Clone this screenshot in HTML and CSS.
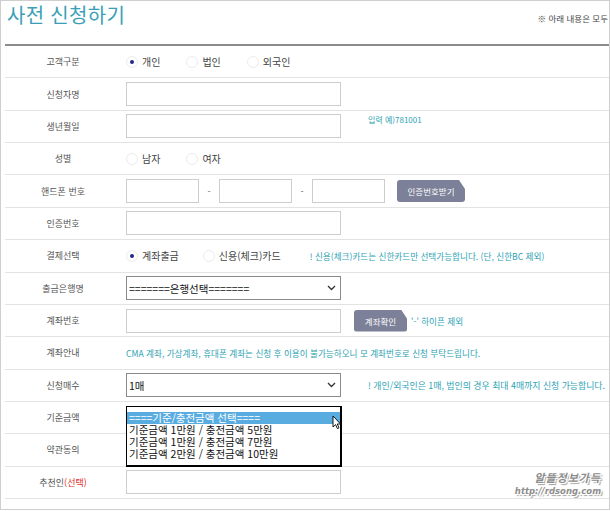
FILE: index.html
```html
<!DOCTYPE html>
<html lang="ko">
<head>
    <meta charset="UTF-8" />
    <meta name="viewport" content="width=device-width, initial-scale=1.0" />
    <title>사전 신청하기</title>
    <link rel="stylesheet" href="styles.css">
</head>
<body>
    <div class="page">
        <div class="head">
            <h1 class="title">사전 신청하기</h1>
            <div class="head-note">※ 아래 내용은 모두</div>
        </div>

        <div class="form">
            <div class="row">
                <div class="label">고객구분</div>
                <div class="field">
                    <span class="radio checked"></span><span class="opt">개인</span>
                    <span class="radio"></span><span class="opt">법인</span>
                    <span class="radio"></span><span class="opt">외국인</span>
                </div>
            </div>

            <div class="row">
                <div class="label">신청자명</div>
                <div class="field"><input class="text" type="text" /></div>
            </div>

            <div class="row">
                <div class="label">생년월일</div>
                <div class="field">
                    <input class="text" type="text" />
                    <span class="note note-birth">입력 예)781001</span>
                </div>
            </div>

            <div class="row">
                <div class="label">성별</div>
                <div class="field">
                    <span class="radio"></span><span class="opt">남자</span>
                    <span class="radio"></span><span class="opt">여자</span>
                </div>
            </div>

            <div class="row">
                <div class="label">핸드폰 번호</div>
                <div class="field">
                    <input class="text short" type="text" />
                    <span class="dash">-</span>
                    <input class="text short" type="text" />
                    <span class="dash">-</span>
                    <input class="text short" type="text" />
                    <span class="btn btn-auth">인증번호받기</span>
                </div>
            </div>

            <div class="row">
                <div class="label">인증번호</div>
                <div class="field"><input class="text" type="text" /></div>
            </div>

            <div class="row">
                <div class="label">결제선택</div>
                <div class="field">
                    <span class="radio checked"></span><span class="opt opt-pay">계좌출금</span>
                    <span class="radio"></span><span class="opt">신용(체크)카드</span>
                    <span class="note note-card">! 신용(체크)카드는 신한카드만 선택가능합니다. (단, 신한BC 제외)</span>
                </div>
            </div>

            <div class="row">
                <div class="label">출금은행명</div>
                <div class="field">
                    <div class="select">
                        <span>=======은행선택=======</span>
                        <svg class="chevron" width="9" height="6" viewBox="0 0 9 6"><path d="M1 1 L4.5 4.5 L8 1" fill="none" stroke="#333" stroke-width="1.3"/></svg>
                    </div>
                </div>
            </div>

            <div class="row">
                <div class="label">계좌번호</div>
                <div class="field">
                    <input class="text" type="text" />
                    <span class="btn btn-account">계좌확인</span>
                    <span class="note">'-' 하이픈 제외</span>
                </div>
            </div>

            <div class="row">
                <div class="label">계좌안내</div>
                <div class="field">
                    <span class="note note-wide">CMA 계좌, 가상계좌, 휴대폰 계좌는 신청 후 이용이 불가능하오니 모 계좌번호로 신청 부탁드립니다.</span>
                </div>
            </div>

            <div class="row">
                <div class="label">신청매수</div>
                <div class="field">
                    <div class="select">
                        <span>1매</span>
                        <svg class="chevron" width="9" height="6" viewBox="0 0 9 6"><path d="M1 1 L4.5 4.5 L8 1" fill="none" stroke="#333" stroke-width="1.3"/></svg>
                    </div>
                    <span class="note note-count">! 개인/외국인은 1매, 법인의 경우 최대 4매까지 신청 가능합니다.</span>
                </div>
            </div>

            <div class="row">
                <div class="label">기준금액</div>
                <div class="field"></div>
                <!-- opened dropdown list lies over the next row -->
                <div class="listbox">
                    <div class="item active">====기준/충전금액 선택====</div>
                    <div class="item">기준금액 1만원 / 충전금액 5만원</div>
                    <div class="item">기준금액 1만원 / 충전금액 7만원</div>
                    <div class="item">기준금액 2만원 / 충전금액 10만원</div>
                    <svg class="cursor" width="10" height="15" viewBox="0 0 10 15"><path d="M1 1 L1 12 L3.6 9.6 L5.4 13.6 L7 12.9 L5.3 9 L8.6 9 Z" fill="#fff" stroke="#000" stroke-width="0.9" stroke-linejoin="round"/></svg>
                </div>
            </div>

            <div class="row">
                <div class="label">약관동의</div>
                <div class="field"></div>
            </div>

            <div class="row">
                <div class="label">추천인<span class="red">(선택)</span></div>
                <div class="field"><input class="text" type="text" /></div>
            </div>
        </div>

        <div class="watermark">
            <div class="wm-name">알뜰정보가득</div>
            <div class="wm-url">http://rdsong.com</div>
        </div>
    </div>
</body>
</html>
```

FILE: styles.css
```css
/* Page frame */
body {
    margin: 0;
    background-color: #fff;
    font-family: "Noto Sans CJK KR", "Noto Sans", sans-serif;
    color: #555;
}

.page {
    position: relative;
    width: 610px;
    height: 510px;
    box-sizing: border-box;
    border: 1px solid #cfcfcf;
    overflow: hidden;
}

/* Header */
.head {
    display: flex;
    justify-content: space-between;
    height: 43px;
}

.title {
    margin: 0;
    padding: 1px 0 0 6px;
    font-size: 20px;
    line-height: 26px;
    font-weight: 400;
    color: #3b9fb7;
    letter-spacing: 0.3px;
}

.head-note {
    margin: 12px 1px 0 0;
    font-size: 8.5px;
    line-height: 10px;
    white-space: nowrap;
    color: #444;
}

/* Form table */
.form {
    margin-left: 4px;
    border-top: 2px solid #8c8c8c;
}

.row {
    position: relative;
    display: flex;
    align-items: center;
    height: 32.36px;
    box-sizing: border-box;
    border-bottom: 1px solid #e3e3e3;
}

.label {
    width: 116px;
    text-align: center;
    font-size: 9px;
    color: #555;
}

.red {
    color: #e0302a;
}

.field {
    display: flex;
    align-items: center;
    padding-left: 5px;
    font-size: 10px;
    color: #444;
}

/* Inputs */
.text {
    width: 215px;
    height: 24px;
    box-sizing: border-box;
    margin: 0;
    border: 1px solid #cdcdcd;
    background: #fff;
}

.text.short {
    width: 73px;
}

.dash {
    width: 20px;
    text-align: center;
    font-size: 9px;
    color: #666;
}

/* Radio buttons */
.radio {
    width: 12px;
    height: 12px;
    box-sizing: border-box;
    border: 1px solid #ececec;
    border-radius: 50%;
    display: flex;
    align-items: center;
    justify-content: center;
}

.radio.checked::after {
    content: "";
    width: 4px;
    height: 4px;
    border-radius: 50%;
    background-color: #1f2a8a;
}

.opt {
    margin: 0 26px 0 4px;
}

.opt-pay {
    margin-right: 24px;
}

/* Buttons */
.btn {
    display: inline-flex;
    align-items: center;
    justify-content: center;
    height: 22px;
    border-radius: 3px;
    background-color: #7c8098;
    color: #fff;
    font-size: 8.5px;
    clip-path: polygon(0 0, calc(100% - 6px) 0, 100% 9px, 100% 100%, 0 100%);
}

.btn-auth {
    width: 68px;
    margin-left: 12px;
}

.btn-account {
    width: 53px;
    margin-left: 13px;
    margin-right: 4px;
}

/* Teal notes */
.note {
    font-size: 8.6px;
    color: #2ea3b4;
    white-space: nowrap;
}

.note-birth {
    align-self: flex-start;
    margin-left: 27px;
    font-size: 8px;
}

.note-card {
    margin-left: 3px;
}

.note-count {
    margin-left: 27px;
    font-size: 8.9px;
}

/* Closed selects */
.select {
    display: flex;
    align-items: center;
    justify-content: space-between;
    width: 215px;
    height: 24px;
    box-sizing: border-box;
    padding: 0 4px 0 2px;
    border: 1px solid #8a8a8a;
    font-size: 10.5px;
    color: #111;
}

/* Opened dropdown list */
.listbox {
    position: absolute;
    left: 121px;
    top: 4px;
    z-index: 2;
    width: 216px;
    height: 61px;
    box-sizing: border-box;
    padding-top: 5px;
    border: 1px solid #000;
    border-right-width: 2px;
    border-bottom-width: 2px;
    background-color: #fff;
}

.item {
    height: 12px;
    line-height: 12px;
    padding-left: 2px;
    font-size: 10.5px;
    color: #111;
    white-space: nowrap;
}

.item.active {
    background-color: #59ace0;
    color: #fff;
}

.cursor {
    position: absolute;
    left: 205px;
    top: 8px;
}

/* Watermark */
.watermark {
    position: absolute;
    right: 8px;
    bottom: 12px;
    text-align: right;
    color: #8d8d8d;
    font-weight: 700;
    font-style: italic;
    text-shadow: 1px 1px 0 #fff, -1px -1px 0 #fff, 1px -1px 0 #fff, -1px 1px 0 #fff, 2px 2px 1px #999;
}

.wm-name {
    font-size: 11px;
    line-height: 16px;
    letter-spacing: 1px;
}

.wm-url {
    font-family: "DejaVu Sans", sans-serif;
    font-size: 8.5px;
    line-height: 12px;
}
```
